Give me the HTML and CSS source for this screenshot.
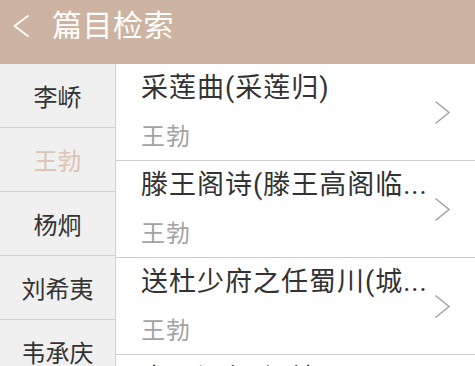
FILE: index.html
```html
<!DOCTYPE html>
<html lang="zh-CN">
<head>
<meta charset="utf-8">
<title>篇目检索</title>
<link rel="stylesheet" href="styles.css">
</head>
<body>
<div class="app">
  <header class="topbar">
    <svg class="back" width="17" height="24" viewBox="0 0 17 24"><path d="M15.5 1.5 L1.5 12 L15.5 22.5" fill="none" stroke="#fff" stroke-width="1.8"/></svg>
    <span class="title">篇目检索</span>
  </header>
  <div class="main">
    <nav class="authors">
      <div class="author">李峤</div>
      <div class="author active">王勃</div>
      <div class="author">杨炯</div>
      <div class="author">刘希夷</div>
      <div class="author">韦承庆</div>
    </nav>
    <ul class="poems">
      <li class="poem">
        <div class="text">
          <div class="ptitle">采莲曲(采莲归)</div>
          <div class="pauthor">王勃</div>
        </div>
        <svg class="chev" width="17" height="25" viewBox="0 0 17 25"><path d="M1.5 1.5 L15 12.5 L1.5 23.5" fill="none" stroke="#a3a3a3" stroke-width="1.5"/></svg>
      </li>
      <li class="poem">
        <div class="text">
          <div class="ptitle">滕王阁诗(滕王高阁临...</div>
          <div class="pauthor">王勃</div>
        </div>
        <svg class="chev" width="17" height="25" viewBox="0 0 17 25"><path d="M1.5 1.5 L15 12.5 L1.5 23.5" fill="none" stroke="#a3a3a3" stroke-width="1.5"/></svg>
      </li>
      <li class="poem">
        <div class="text">
          <div class="ptitle">送杜少府之任蜀川(城...</div>
          <div class="pauthor">王勃</div>
        </div>
        <svg class="chev" width="17" height="25" viewBox="0 0 17 25"><path d="M1.5 1.5 L15 12.5 L1.5 23.5" fill="none" stroke="#a3a3a3" stroke-width="1.5"/></svg>
      </li>
      <li class="poem">
        <div class="text">
          <div class="ptitle">春日还郊(闲情兀...</div>
          <div class="pauthor">王勃</div>
        </div>
        <svg class="chev" width="17" height="25" viewBox="0 0 17 25"><path d="M1.5 1.5 L15 12.5 L1.5 23.5" fill="none" stroke="#a3a3a3" stroke-width="1.5"/></svg>
      </li>
    </ul>
  </div>
</div>
</body>
</html>
```

FILE: styles.css
```css
* { box-sizing: border-box; }
html, body { margin: 0; padding: 0; }
body {
  width: 475px;
  height: 366px;
  overflow: hidden;
  background: #fff;
  font-family: Roboto, "Noto Sans CJK SC", sans-serif;
}
.app { display: flex; flex-direction: column; height: 366px; }
.topbar {
  height: 64px;
  flex: none;
  background: #cdb3a2;
  display: flex;
  align-items: center;
  padding-left: 13px;
  padding-bottom: 12px;
}
.back { display: block; margin-right: 22px; }
.title {
  color: #fff;
  font-size: 30px;
  line-height: 40px;
  letter-spacing: 0.5px;
}
.main { display: flex; flex: 1; min-height: 0; }
.authors {
  width: 116px;
  flex: none;
  background: #f0f0f0;
  border-right: 1px solid #cfcfcf;
}
.author {
  height: 64px;
  border-bottom: 1px solid #cfcfcf;
  display: flex;
  align-items: center;
  justify-content: center;
  font-size: 24px;
  color: #333;
}
.author.active { color: #dcc3b3; }
.poems { list-style: none; margin: 0; padding: 0; flex: 1; min-width: 0; }
.poem {
  height: 97px;
  border-bottom: 1px solid #cfcfcf;
  display: flex;
  align-items: center;
  padding-left: 25px;
  padding-right: 24px;
}
.text { flex: 1; min-width: 0; align-self: flex-start; }
.ptitle {
  margin-top: 6px;
  font-size: 27px;
  line-height: 36px;
  letter-spacing: 1px;
  color: #333;
  white-space: nowrap;
  overflow: hidden;
}
.pauthor {
  margin-top: 16px;
  font-size: 24px;
  line-height: 30px;
  letter-spacing: 1px;
  color: #a3a3a3;
}
.chev { display: block; flex: none; }
```
